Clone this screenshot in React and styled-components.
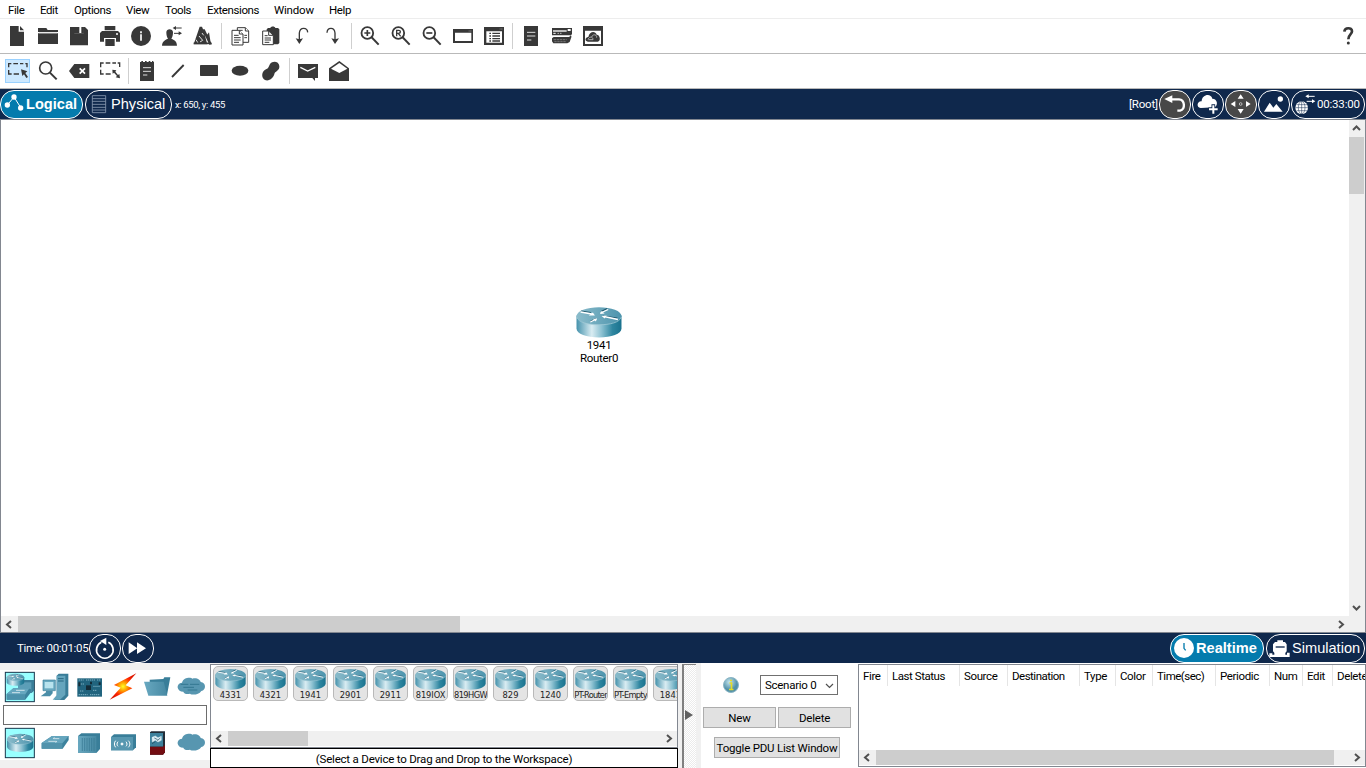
import React from "react";
import styled, { createGlobalStyle, css } from "styled-components";

const INK = "#383838";
const NAVY = "#0f284c";
const TEAL = "#5796b0";

const GlobalStyle = createGlobalStyle`
  html, body { margin: 0; padding: 0; overflow: hidden; }
  *, *::before, *::after { box-sizing: border-box; }
  body { background: #f0f0f0; }
`;

const Window = styled.div`
  width: 1366px;
  height: 768px;
  display: flex;
  flex-direction: column;
  overflow: hidden;
  font-family: Roboto, "Liberation Sans", Arial, sans-serif;
  font-size: 11.5px;
  letter-spacing: -0.28px;
  line-height: 13px;
  color: #000;
  white-space: nowrap;
`;

const MenuBar = styled.nav`
  height: 19px;
  flex: none;
  display: flex;
  padding: 4px 0 0 8px;
  background: #fff;
  border-bottom: 1px solid #ededed;
`;
const MenuItem = styled.span`
  width: ${(p) => p.$w}px;
  letter-spacing: ${(p) => p.$ls ?? -0.4}px;
`;

const ToolBar = styled.div`
  height: 35px;
  flex: none;
  display: flex;
  padding-left: 2px;
  background: #fff;
  border-bottom: 1px solid #b9b9b9;
`;
const ToolButton = styled.div`
  width: 31px;
  height: 34px;
  display: flex;
  color: ${INK};
  ${(p) =>
    p.$active &&
    css`
      background: linear-gradient(#cce8ff, #cce8ff) 4px 6px / 23px 22px no-repeat,
        linear-gradient(#99d1ff, #99d1ff) 3px 5px / 25px 24px no-repeat;
    `}
  ${(p) => p.$end && "margin-left: auto;"}
`;
const Separator = styled.div`
  width: 6px;
  height: 26px;
  margin-top: 4px;
  flex: none;
  &::before {
    content: "";
    display: block;
    width: 1px;
    height: 26px;
    margin-left: 2px;
    background: #cfcfcf;
  }
`;
const Glyph = styled.svg`
  display: block;
  flex: none;
  overflow: visible;
`;

const NavyBar = styled.div`
  height: ${(p) => p.$h}px;
  flex: none;
  display: flex;
  align-items: center;
  background: ${NAVY};
  color: #fff;
  padding: ${(p) => p.$pad};
`;
const PillGroup = styled.div`
  display: flex;
  gap: ${(p) => p.$gap}px;
`;
const Pill = styled.div`
  height: 29px;
  width: ${(p) => p.$w}px;
  flex: none;
  display: flex;
  align-items: center;
  border: 1px solid #fff;
  border-radius: ${(p) => p.$r ?? 14}px;
  background: ${(p) => p.$bg ?? "transparent"};
  font-family: ${(p) => (p.$small ? "inherit" : '"Liberation Sans", Arial, sans-serif')};
  font-size: ${(p) => (p.$small ? "11.5px" : "14.6px")};
  font-weight: ${(p) => (p.$bold ? 700 : 400)};
  letter-spacing: ${(p) => (p.$small ? "-0.2px" : "0")};
  line-height: 20px;
  color: #fff;
`;
const BarText = styled.span`
  margin-left: ${(p) => p.$ml ?? 0}px;
  font-size: ${(p) => p.$size ?? 11.5}px;
  letter-spacing: ${(p) => p.$ls ?? -0.2}px;
  width: ${(p) => (p.$w ? p.$w + "px" : "auto")};
`;
const Spacer = styled.div`
  flex: 1;
`;

const Workspace = styled.main`
  height: 514px;
  flex: none;
  display: grid;
  grid-template-columns: 1fr 16px;
  grid-template-rows: 1fr 16px;
  border: 1px solid #828790;
  background: #fff;
`;
const Canvas = styled.div`
  position: relative;
`;
const DeviceNode = styled.div`
  position: absolute;
  left: ${(p) => p.$x}px;
  top: ${(p) => p.$y}px;
  width: 60px;
  display: flex;
  flex-direction: column;
  align-items: center;
`;
const Scroll = styled.div`
  display: flex;
  flex-direction: ${(p) => (p.$vertical ? "column" : "row")};
  align-items: stretch;
  background: #f0f0f0;
  height: ${(p) => (p.$h ? p.$h + "px" : "auto")};
  flex: none;
`;
const ArrowBox = styled.div`
  width: ${(p) => (p.$tall ? 15 : 17)}px;
  min-height: ${(p) => (p.$tall ? 17 : 15)}px;
  flex: none;
  display: flex;
  align-items: center;
  justify-content: center;
`;
const Thumb = styled.div`
  background: #cdcdcd;
  width: ${(p) => (p.$w ? p.$w + "px" : "auto")};
  height: ${(p) => (p.$h ? p.$h + "px" : "auto")};
  margin-right: ${(p) => (p.$h ? 1 : 0)}px;
`;
const Corner = styled.div`
  background: #f0f0f0;
`;

const Dock = styled.div`
  height: 105px;
  flex: none;
  display: flex;
  background: #f0f0f0;
`;
const Palette = styled.div`
  width: 210px;
  height: 90px;
  margin-top: 7px;
  background: #fff;
  display: flex;
  flex-direction: column;
  flex: none;
`;
const PaletteRow = styled.div`
  display: flex;
  height: 35px;
  padding-left: 3px;
`;
const SearchBox = styled.div`
  height: 20px;
  margin: 0 3px;
  border: 1px solid #6d6d6d;
  background: #fff;
`;
const Models = styled.div`
  width: 468px;
  flex: none;
  display: flex;
  flex-direction: column;
  padding-top: 1px;
`;
const ModelList = styled.div`
  height: 84px;
  border: 1px solid #828790;
  background: #fff;
  display: flex;
  flex-direction: column;
  justify-content: space-between;
  padding-bottom: 1px;
`;
const ModelRow = styled.div`
  display: flex;
  gap: 5px;
  padding: 1px 0 0 2px;
  overflow: hidden;
`;
const Tile = styled.div`
  width: 35px;
  height: 35px;
  flex: none;
  border: 1px solid #b9b9b9;
  border-radius: 5px;
  background: #e4e4e4;
  display: flex;
  flex-direction: column;
  align-items: center;
  overflow: hidden;
`;
const TileLabel = styled.span`
  font-family: "DejaVu Sans", sans-serif;
  font-size: 8.3px;
  line-height: 9px;
  letter-spacing: ${(p) => p.$ls}px;
  color: #222;
`;
const Hint = styled.div`
  height: 20px;
  border: 1px solid #000;
  background: #fff;
  text-align: center;
  line-height: 20px;
  letter-spacing: -0.2px;
`;
const Splitter = styled.div`
  width: 14px;
  margin: 1px 5px 0 4px;
  padding-bottom: 4px;
  flex: none;
  display: flex;
  align-items: center;
  border-left: 2px solid #808080;
  border-top: 1px solid #808080;
  background: repeating-conic-gradient(#fff 0 25%, #ebebeb 0 50%) 0 0 / 2px 2px;
`;
const Scenario = styled.section`
  width: 157px;
  flex: none;
  background: #fff;
  padding: 12px 7px 0 2px;
`;
const ScenarioRow = styled.div`
  display: flex;
  justify-content: ${(p) => p.$justify ?? "flex-start"};
  height: ${(p) => p.$h}px;
  gap: 2px;
`;
const Select = styled.div`
  width: 78px;
  height: 20px;
  flex: none;
  margin-left: auto;
  margin-right: 13px;
  border: 1px solid #707070;
  padding: 0 3px 0 4px;
  display: flex;
  align-items: center;
  justify-content: space-between;
`;
const Button = styled.div`
  width: ${(p) => p.$w}px;
  height: 21px;
  border: 1px solid #adadad;
  background: #e1e1e1;
  text-align: center;
  line-height: 20px;
  letter-spacing: ${(p) => p.$ls ?? -0.2}px;
`;
const PduArea = styled.section`
  flex: 1;
  min-width: 0;
  background: #fff;
  padding-top: 1px;
`;
const PduTable = styled.div`
  height: 103px;
  border: 1px solid #828790;
  display: flex;
  flex-direction: column;
  justify-content: space-between;
  overflow: hidden;
  padding-bottom: 1px;
`;
const HeaderRow = styled.div`
  display: flex;
  overflow: hidden;
`;
const HeaderCell = styled.span`
  width: ${(p) => p.$w}px;
  height: 21px;
  flex: none;
  padding-left: 4px;
  line-height: 23px;
  border-right: 1px solid #e5e5e5;
  letter-spacing: ${(p) => p.$ls ?? -0.38}px;
`;

const Defs = styled.svg`
  position: absolute;
  width: 0;
  height: 0;
`;

const arrowPaths = {
  left: "M6 1 L2 4.5 L6 8",
  right: "M3 1 L7 4.5 L3 8",
  up: "M1 6 L4.5 2.5 L8 6",
  down: "M1 3 L4.5 6.5 L8 3",
};
const Arrow = ({ dir, width = 2 }) => (
  <Glyph width="9" height="9" viewBox="0 0 9 9">
    <path d={arrowPaths[dir]} fill="none" stroke="#505050" strokeWidth={width} />
  </Glyph>
);

const Tool = ({ x, y = 57, active, end, children }) => (
  <ToolButton $active={active} $end={end}>
    <Glyph width="31" height="34" viewBox={`${x} ${y} 93 102`} fill="currentColor">
      {children}
    </Glyph>
  </ToolButton>
);

const line = { fill: "none", stroke: INK };
const white = { fill: "none", stroke: "#fff" };

const Lens = ({ cx, children }) => (
  <>
    <circle cx={cx} cy="99" r="17.5" {...line} strokeWidth="5.5" />
    <path d={`M${cx + 12} 111 L${cx + 34} 134`} {...line} strokeWidth="6" />
    {children}
  </>
);

/* Disc-shaped router with four arrows on its lid, 90 x 62 units */
const RouterArt = ({ shade = "url(#router)" }) => (
  <>
    <path d="M0 17 V43 C0 54 20 61 44 61 S88 54 88 43 V17 Z" fill={shade} />
    <ellipse cx="44" cy="18" rx="44" ry="17.5" fill="url(#lid)" />
    <path d="M0 20 C4 31 22 35.500 44 35.500 S84 31 88 20" fill="none" stroke="#a3cad6" strokeWidth="1.500" />
    <path d="M9 8 L28 11 M48 9 L60 3 M52 18 L80 22 M27 29 L38 23" fill="none" stroke="#22586d" strokeWidth="2" />
    <g fill="none" stroke="#fff" strokeWidth="2.600">
      <path d="M8 10 L30 14 M47 12 L62 5 M54 19 L81 25 M27 30 L39 24" />
    </g>
    <g fill="#fff">
      <path d="M36 17 L24 17 L32 11 Z M46 14 L49 8 L55 13 Z M49 18 L59 17 L55 23 Z M40 23 L38 29 L32 24 Z" />
    </g>
  </>
);

const menus = [
  ["File", 32], ["Edit", 34], ["Options", 52], ["View", 39], ["Tools", 42],
  ["Extensions", 67], ["Window", 55, -0.2], ["Help", 30],
];
const models = [
  ["4331", 0.1], ["4321", 0.1], ["1941", 0.1], ["2901", 0.1], ["2911", 0.1], ["819IOX", -0.05],
  ["819HGW", -0.6], ["829", 0], ["1240", 0], ["PT-Router", -0.8], ["PT-Empty", -0.75], ["1841", 0.1],
];
const columns = [
  ["Fire", 29], ["Last Status", 72, -0.45], ["Source", 48], ["Destination", 72, -0.5], ["Type", 36], ["Color", 37],
  ["Time(sec)", 63, -0.5], ["Periodic", 54], ["Num", 33], ["Edit", 30], ["Delete", 50],
];

const MainTools = () => (
  <ToolBar>
    <Tool x={6}>
      <path d="M30 78 H56 V95 H72 V138 H30 Z M60 78 L72 91 H60 Z" />
    </Tool>
    <Tool x={99}>
      <path d="M114 84 H139 L143 90 H174 V96 H114 Z M114 100 H174 V132 H114 Z" />
      <path d="M117 99 H171" stroke="#bbb" strokeWidth="2" />
    </Tool>
    <Tool x={192}>
      <path d="M210 81 H255 L264 90 V136 H210 Z" />
      <path d="M222 80 H250 V102 H222 Z" fill="#fff" />
      <path d="M222 81 H238 V99 H222 Z M244 81 H250 V99 H244 Z" />
      <path d="M222 81 V101 H250 V81" {...line} strokeWidth="3" />
    </Tool>
    <Tool x={285}>
      <path d="M314 78 H346 V91 H314 Z M306 93 H354 L360 99 V125 H348 V114 H312 V125 H300 V99 Z M316 117 H344 V138 H316 Z" />
      <circle cx="351" cy="102" r="3" fill="#fff" />
    </Tool>
    <Tool x={378}>
      <circle cx="423" cy="108" r="30" />
      <path d="M420 94 H426 V100 H420 Z M420 103 H426 V122 H420 Z" fill="#ddd" />
    </Tool>
    <Tool x={471}>
      <path d="M499 97 C499 85 519 85 519 97 C519 105 517 112 514 116 C525 121 530 124 531 137 H486 C487 125 492 121 504 116 C501 112 499 105 499 97 Z" />
      <path d="M524 84 H545 M522 100 H542" {...line} strokeWidth="3" />
      <path d="M518 84 L528 78 V90 Z M546 100 L536 94 V106 Z" />
    </Tool>
    <Tool x={564}>
      <path d="M599 80 L606 80 L610 90 L622 133 H581 Z M606 88 L614 88 L636 133 L628 134 Z M621 105 L627 97 L633 134 Z" />
      <path d="M597 108 L608 121 M608 121 L600 126 M606 99 L611 106 M588 119 L594 129" stroke="#fff" strokeWidth="2.5" fill="none" />
      <path d="M581 130 H634" stroke={INK} strokeWidth="5" />
    </Tool>
    <Separator />
    <Tool x={675}>
      <g fill="#fff" stroke={INK} strokeWidth="3">
        <path d="M712 83 H736 L746 93 V127 H712 Z" />
        <path d="M696 91 H718 L729 102 V135 H696 Z" />
        <path d="M736 83 V93 H746 M718 91 V102 H729" />
      </g>
      <path d="M702 106 H716 M702 113 H722 M702 120 H722 M702 127 H717 M733 106 H741 M733 113 H741 M718 91 H728" {...line} strokeWidth="3" />
    </Tool>
    <Tool x={768}>
      <path d="M800 88 L804 84 H811 C812 78 825 78 826 84 H834 L838 88 V129 L834 133 H800 Z" />
      <path d="M788 93 H806 L820 106 V134 H788 Z" fill="#fff" stroke={INK} strokeWidth="3" />
      <path d="M806 93 V106 H820 M794 107 H803 M794 114 H813 M794 120 H813 M794 127 H808" {...line} strokeWidth="3" />
    </Tool>
    <Tool x={861}>
      <path d="M923 97 C922 82 900 80 898 99 V120" {...line} strokeWidth="4" />
      <path d="M887 115 L898 118 L909 115 L898 132 Z" />
    </Tool>
    <Tool x={954}>
      <path d="M981 98 C982 82 1003 80 1005 99 V120" {...line} strokeWidth="4" />
      <path d="M994 115 L1005 118 L1017 115 L1005 132 Z" />
    </Tool>
    <Separator />
    <Tool x={45}>
      <Lens cx={82}>
        <path d="M73 99 H91 M82 90 V108" {...line} strokeWidth="5" />
      </Lens>
    </Tool>
    <Tool x={138}>
      <Lens cx={175}>
        <path d="M170 109 V91 H176 C183 91 183 100 176 100 H170 M175 100 L182 109" {...line} strokeWidth="4" />
      </Lens>
    </Tool>
    <Tool x={231}>
      <Lens cx={268}>
        <path d="M259 99 H277" {...line} strokeWidth="5" />
      </Lens>
    </Tool>
    <Tool x={324}>
      <path d="M339 87 H399 V129 H339 Z M345 98 V123 H394 V98 Z" fillRule="evenodd" />
      <path d="M386 93 H396" stroke="#aaa" strokeWidth="2" strokeDasharray="3 1.5" />
    </Tool>
    <Tool x={417}>
      <path d="M432 81 H492 V135 H432 Z M439 94 V128 H486 V94 Z" fillRule="evenodd" />
      <path d="M448 100 H453 M457 100 H480 M448 108 H453 M457 108 H480 M448 116 H453 M457 116 H480 M448 123 H453 M457 123 H480" {...line} strokeWidth="4" />
      <path d="M479 87 H489" stroke="#aaa" strokeWidth="2" strokeDasharray="3 1.5" />
    </Tool>
    <Separator />
    <Tool x={528}>
      <path d="M552 78 H594 V138 H552 Z" />
      <path d="M561 97 H586 M561 108 H586 M561 120 H574" stroke="#ddd" strokeWidth="3" />
    </Tool>
    <Tool x={621}>
      <path d="M636 84 H696 V103 L690 107 H694 V112 L689 126 L682 130 H640 L636 124 V115 L641 111 H688 L691 106 H636 Z" />
      <path d="M639 93 H680" stroke="#fff" strokeWidth="4" />
      <path d="M640 100 H647 M653 100 H656 M661 100 H664" stroke="#fff" strokeWidth="3" />
      <path d="M641 119 H680 M643 125 H678" stroke="#999" strokeWidth="2" strokeDasharray="7 2" />
      <path d="M683 87 H692 V93 H683 Z" fill="#fff" />
    </Tool>
    <Tool x={714}>
      <path d="M729 78 H789 V138 H729 Z M735 92 V132 H783 V92 Z" fillRule="evenodd" />
      <path d="M744 125 C733 124 735 111 745 111 C748 94 766 92 770 104 C781 104 783 124 773 125 Z" />
      <path d="M744 118 C748 109 759 109 759 119 H745 M755 111 C758 101 772 103 770 113" fill="none" stroke="#aaa" strokeWidth="3" />
    </Tool>
    <Tool x={675} y={-3} end>
      <path d="M703 35 C704 22 726 21 726 34 C726 44 715 43 715 58" {...line} strokeWidth="8" />
      <circle cx="715" cy="69" r="4.5" />
    </Tool>
  </ToolBar>
);

const DrawTools = () => (
  <ToolBar>
    <Tool x={6} y={162} active>
      <path d="M26 202 V191 H34 M40 191 H54 M60 191 H70 M76 191 H81 V202 M26 210 V222 H35 M41 222 H57" {...line} strokeWidth="4" />
      <path d="M63 208 L82 214 L76 219 L84 231 L79 234 L72 223 L67 228 Z" />
    </Tool>
    <Tool x={99} y={162}>
      <circle cx="137" cy="204" r="18" {...line} strokeWidth="5" />
      <path d="M149 217 L170 238" {...line} strokeWidth="6" />
    </Tool>
    <Tool x={192} y={162}>
      <path d="M207 213 L223 192 H268 V234 H223 Z" />
      <path d="M239 205 L255 221 M255 205 L239 221" stroke="#fff" strokeWidth="5" />
    </Tool>
    <Tool x={285} y={162}>
      <path d="M302 202 V189 H311 M317 189 H331 M337 189 H348 M353 189 H359 V201 M302 209 V222 H311 M317 222 H332" {...line} strokeWidth="4" />
      <path d="M337 209 L349 211 L346 215 L354 225 L358 222 L360 235 L347 232 L351 228 L342 218 L338 221 Z" />
    </Tool>
    <Separator />
    <Tool x={396} y={162}>
      <path d="M420 186 H424 V183 H429 V186 H435 V183 H440 V186 H446 V183 H451 V186 H456 V183 H460 V186 H462 V243 H420 Z" />
      <path d="M429 203 H453 M429 214 H453 M429 225 H442" stroke="#ddd" strokeWidth="3" />
    </Tool>
    <Tool x={489} y={162}>
      <path d="M516 231 L551 195" {...line} strokeWidth="5.5" />
    </Tool>
    <Tool x={582} y={162}>
      <rect x="600" y="195" width="54" height="33" rx="2" />
    </Tool>
    <Tool x={675} y={162}>
      <ellipse cx="720" cy="212.500" rx="25" ry="15" />
    </Tool>
    <Tool x={768} y={162}>
      <path d="M810 192 C818 181 837 184 838 198 C839 211 829 213 824 219 C821 234 807 245 795 240 C783 235 784 214 798 208 C806 205 806 199 810 192 Z" />
    </Tool>
    <Separator />
    <Tool x={879} y={162}>
      <path d="M894 192 H954 V234 H945 V243 L937 234 H894 Z" />
      <path d="M901 202 L923 213 L946 202" stroke="#fff" strokeWidth="4" fill="none" />
    </Tool>
    <Tool x={972} y={162}>
      <path d="M987 205 L1018 183 L1047 205 V243 H987 Z" />
      <path d="M993 206 L1018 189 L1042 206 L1018 219 Z" fill="#fff" />
    </Tool>
  </ToolBar>
);

const LocationBar = () => (
  <NavyBar $h={30} $pad="0 1px 0 0">
    <PillGroup $gap={2}>
      <Pill $w={83} $bg="#047bad" $bold>
        <Glyph width="25" height="27" viewBox="3 273 75 81" fill="#fff">
          <path d="M22 315 L42 291 L63 324" {...white} strokeWidth="3" />
          <circle cx="22" cy="315" r="8" /><circle cx="42" cy="291" r="8" /><circle cx="62" cy="324" r="8" />
        </Glyph>
        Logical
      </Pill>
      <Pill $w={87}>
        <Glyph width="25" height="27" viewBox="258 273 75 81">
          <path d="M277 287 H317 V338 H277 Z M277 296 H317 M277 304 H317 M277 313 H317 M277 322 H317 M277 330 H317" fill="none" stroke="#8c9bb2" strokeWidth="2.500" />
        </Glyph>
        Physical
      </Pill>
    </PillGroup>
    <BarText $ml={3} $size={9.5} $ls={-0.35}>x: 650, y: 455</BarText>
    <Spacer />
    <BarText $w={30}>[Root]</BarText>
    <PillGroup $gap={1}>
      <Pill $w={32} $bg="#484848">
        <Glyph width="30" height="27" viewBox="151 213 90 81">
          <path d="M180 238 H208 C226 239 228 268 211 272 H203" {...white} strokeWidth="7" />
          <path d="M164 237 L188 226 V249 Z" fill="#fff" />
        </Glyph>
      </Pill>
      <Pill $w={32}>
        <Glyph width="30" height="27" viewBox="250 213 90 81" fill="#fff">
          <path d="M273 264 C258 262 263 242 276 244 C276 223 304 218 308 236 C323 236 327 256 314 262 Z" />
          <path d="M311 253 V283 M296 268 H326" stroke={NAVY} strokeWidth="11" />
          <path d="M311 256 V281 M298 268 H324" stroke="#fff" strokeWidth="6" />
        </Glyph>
      </Pill>
      <Pill $w={32} $bg="#484848">
        <Glyph width="30" height="27" viewBox="349 213 90 81" fill="#fff">
          <path d="M393 223 L402 236 H384 Z M393 281 L402 267 H384 Z M363 252 L377 243 V261 Z M423 252 L409 243 V261 Z" />
          <circle cx="393" cy="252" r="4" fill="none" stroke="#bbb" strokeWidth="3" />
        </Glyph>
      </Pill>
      <Pill $w={32}>
        <Glyph width="30" height="27" viewBox="448 213 90 81" fill="#fff">
          <path d="M463 275 L480 248 L491 263 L500 252 L519 275 Z" />
          <circle cx="512" cy="237" r="8" />
        </Glyph>
      </Pill>
      <Pill $w={74} $small>
        <Glyph width="25" height="27" viewBox="546 213 75 81" fill="#fff">
          <circle cx="575" cy="263" r="19" />
          <path d="M556 263 H594 M575 244 V282 M560 254 H591 M560 272 H591" stroke={NAVY} strokeWidth="1.500" />
          <ellipse cx="575" cy="263" rx="10" ry="19" fill="none" stroke={NAVY} strokeWidth="1.500" />
          <path d="M592 229 H614 M590 244 H609" stroke="#fff" strokeWidth="3" />
          <path d="M586 229 L596 223 V235 Z M616 244 L606 238 V250 Z" />
        </Glyph>
        00:33:00
      </Pill>
    </PillGroup>
  </NavyBar>
);

const TimeBar = () => (
  <NavyBar $h={30} $pad="0 1px 0 17px">
    <BarText $w={72} $ls={-0.32}>Time: 00:01:05</BarText>
    <PillGroup $gap={1}>
      <Pill $w={32}>
        <Glyph width="30" height="27" viewBox="271 105 90 81" fill="#fff">
          <path d="M305 127 A25 25 0 1 0 326 127" {...white} strokeWidth="5" />
          <path d="M301 123 L320 113 V135 Z" /><circle cx="315" cy="148" r="4.500" />
        </Glyph>
      </Pill>
      <Pill $w={32}>
        <Glyph width="30" height="27" viewBox="370 105 90 81" fill="#fff">
          <path d="M387 127 L413 145 L387 162 Z M412 127 L439 145 L412 162 Z" />
        </Glyph>
      </Pill>
    </PillGroup>
    <Spacer />
    <PillGroup $gap={2}>
      <Pill $w={94} $bg="#047bad" $bold>
        <Glyph width="25" height="27" viewBox="135 135 75 81">
          <circle cx="174" cy="174" r="30" fill="#fff" />
          <path d="M174 159 V175 L179 181" fill="none" stroke="#047bad" strokeWidth="4" />
        </Glyph>
        Realtime
      </Pill>
      <Pill $w={99}>
        <Glyph width="25" height="27" viewBox="424 135 75 81" fill="#fff">
          <path d="M455 151 H472 V156 H478 L483 163 V184 L479 188 H446 L442 184 V163 L448 156 H455 Z" />
          <path d="M431 190 H440 V194 H484 V188 H492 V201 H431 Z M446 186 H479 V196 H446 Z" />
          <path d="M450 171 H477" stroke={NAVY} strokeWidth="4" />
        </Glyph>
        Simulation
      </Pill>
    </PillGroup>
  </NavyBar>
);

const Cell = ({ i, y, children }) => (
  <Glyph width="34" height="35" viewBox={`${9 + 102 * i} ${y} 102 105`}>
    {children}
  </Glyph>
);

const DevicePalette = () => (
  <Palette>
    <PaletteRow>
      <Cell i={0} y={210}>
        <rect x="16" y="217" width="87" height="88" fill="#99ffff" stroke="#17384d" strokeWidth="3" />
        <path d="M54 247 L61 240 H102 V272 L95 279 H54 Z" fill="#397d98" />
        <path d="M54 247 H94 V278 H54 Z" fill="#5c9eb7" />
        <g transform="translate(20 221) scale(.6)"><RouterArt /></g>
        <path d="M20 282 L40 265 H84 L93 268 V277 L76 299 H20 Z" fill="#3c829d" />
        <path d="M20 282 L40 265 H88 L75 284 H20 Z" fill="#66a7bf" />
        <path d="M20 283 H75 V299 H20 Z" fill="#4c91ab" />
        <path d="M36 278 H60 M48 271 H74" stroke="#fff" strokeWidth="2" />
      </Cell>
      <Cell i={1} y={210}>
        <path d="M170 227 L176 221 H205 V287 L193 300 H163 L170 291 Z" fill="#397d98" />
        <path d="M170 227 H196 V284 L180 299 H158 L170 286 Z" fill="#65a5bd" />
        <path d="M174 236 H191 M174 243 H191" stroke="#286780" strokeWidth="3" />
        <path d="M129 240 H166 V272 H129 Z" fill="#68a9c0" stroke="#3b819b" strokeWidth="2" />
        <path d="M134 246 H160 V265 H134 Z" fill="#b8e3ee" />
        <path d="M138 273 H158 V280 L150 289 H122 L138 277 Z" fill="#4b8ea8" />
      </Cell>
      <Cell i={2} y={210}>
        <rect x="232" y="235" width="74" height="55" fill="#21647e" />
        <path d="M258 256 H273 V270 H258 Z" fill="#142c38" />
        <path d="M236 240 H251 M258 240 H285 M291 240 H302 M236 284 H263 M270 284 H300 M242 252 H253 M280 259 H300 M240 273 H251 M279 271 H289" stroke="#7db0c3" strokeWidth="3" strokeDasharray="4 2" />
        <path d="M238 247 V259 M299 247 V255 M273 245 V253" stroke="#142c38" strokeWidth="6" />
      </Cell>
      <Cell i={3} y={210}>
        <path d="M409 220 L342 255 L362 263 L329 299 L397 265 L377 256 Z" fill="url(#bolt)" />
      </Cell>
      <Cell i={4} y={210}>
        <path d="M449 239 L490 237 L493 232 H511 L501 285 L450 279 Z" fill="#397e99" />
        <path d="M432 245 H491 L502 287 H445 Z" fill="url(#device)" />
      </Cell>
      <Cell i={5} y={210}>
        <path d="M550 275 C530 275 526 250 546 248 C550 233 571 231 577 236 C589 231 602 240 602 246 C619 247 619 271 604 273 C596 285 577 286 570 281 C560 284 552 281 550 275 Z" fill={TEAL} />
        <path d="M542 253 H565 M570 253 H598 M550 262 H582 M563 270 H592" stroke="#347891" strokeWidth="3" />
      </Cell>
    </PaletteRow>
    <SearchBox />
    <PaletteRow>
      <Cell i={0} y={375}>
        <rect x="16" y="385" width="87" height="88" fill="#99ffff" stroke="#17384d" strokeWidth="3" />
        <g transform="translate(21 401) scale(.9)"><RouterArt /></g>
      </Cell>
      <Cell i={1} y={375}>
        <path d="M125 429 L156 408 H206 V420 L188 446 H125 Z" fill="#3c829d" />
        <path d="M125 429 L156 408 H206 L187 430 Z" fill="#65a5bd" />
        <path d="M125 429 H187 V446 H125 Z" fill="#5193ac" />
        <path d="M145 424 H170 L167 428 M178 416 H160 L163 412" stroke="#fff" strokeWidth="2" fill="none" />
      </Cell>
      <Cell i={2} y={375}>
        <path d="M234 408 L244 400 H300 V447 L290 458 H234 Z" fill="#397e99" />
        <path d="M234 408 H289 V458 H234 Z" fill="url(#device)" />
        <path d="M247 414 V453 M254 414 V453 M261 414 V453 M268 414 V453 M275 414 V453 M282 414 V453" stroke="#34768f" strokeWidth="2" />
      </Cell>
      <Cell i={3} y={375}>
        <path d="M333 411 L342 403 H408 V442 L399 451 H333 Z" fill="#397e99" />
        <path d="M333 411 H399 V451 H333 Z" fill="#5797b0" />
        <g fill="none" stroke="#fff" strokeWidth="3">
          <path d="M347 422 C342 427 342 437 347 442 M354 425 C350 430 350 435 354 439 M378 425 C382 430 382 435 378 439 M385 422 C391 428 391 436 385 442" />
          <circle cx="366" cy="432" r="3" fill="#fff" />
        </g>
      </Cell>
      <Cell i={4} y={375}>
        <path d="M450 397 L454 394 H495 V457 L489 464 H450 Z" fill="#222d38" />
        <path d="M450 399 H489 V440 H450 Z" fill="#3d819c" />
        <path d="M450 440 H489 L495 435 V457 L489 464 H450 Z" fill="#730d12" />
        <path d="M456 412 L466 408 L474 413 L484 409 V421 L474 426 L466 421 L457 426 Z" fill="#d9edf5" stroke="#fff" />
        <path d="M463 414 L473 419 M481 414 L472 422 M466 425 L456 431" stroke="#1b4355" strokeWidth="2" />
      </Cell>
      <Cell i={5} y={375}>
        <path d="M550 443 C530 443 526 418 546 416 C550 401 571 399 577 404 C589 399 602 408 602 414 C619 415 619 439 604 441 C596 453 577 454 570 449 C560 452 552 449 550 443 Z" fill={TEAL} />
      </Cell>
    </PaletteRow>
  </Palette>
);

export default function App() {
  return (
    <Window>
      <GlobalStyle />
      <Defs>
        <defs>
          <linearGradient id="router">
            <stop offset="0" stopColor="#4592ac" />
            <stop offset=".34" stopColor="#d9ecf2" />
            <stop offset=".55" stopColor="#8fc3d3" />
            <stop offset=".8" stopColor="#2f86a0" />
            <stop offset="1" stopColor="#1a728e" />
          </linearGradient>
          <linearGradient id="lid">
            <stop offset="0" stopColor="#8bbccb" />
            <stop offset="1" stopColor="#4d94ad" />
          </linearGradient>
          <linearGradient id="device">
            <stop offset="0" stopColor="#68a8c0" />
            <stop offset="1" stopColor="#4789a3" />
          </linearGradient>
          <radialGradient id="bolt">
            <stop offset="0" stopColor="#ffff25" />
            <stop offset=".35" stopColor="#ff9800" />
            <stop offset=".7" stopColor="#ff2500" />
            <stop offset="1" stopColor="#dd1700" />
          </radialGradient>
          <radialGradient id="info" cx=".4" cy=".3">
            <stop offset="0" stopColor="#c4e4ed" />
            <stop offset="1" stopColor="#5291a9" />
          </radialGradient>
        </defs>
      </Defs>
      <MenuBar>
        {menus.map(([name, w, ls]) => (
          <MenuItem key={name} $w={w} $ls={ls}>{name}</MenuItem>
        ))}
      </MenuBar>
      <MainTools />
      <DrawTools />
      <LocationBar />
      <Workspace>
        <Canvas>
          <DeviceNode $x={568} $y={187}>
            <Glyph width="46" height="32" viewBox="-1 0 90 64" preserveAspectRatio="none"><RouterArt /></Glyph>
            <span>1941</span>
            <span>Router0</span>
          </DeviceNode>
        </Canvas>
        <Scroll $vertical>
          <ArrowBox $tall><Arrow dir="up" /></ArrowBox>
          <Thumb $h={57} />
          <Spacer />
          <ArrowBox $tall><Arrow dir="down" /></ArrowBox>
        </Scroll>
        <Scroll>
          <ArrowBox><Arrow dir="left" /></ArrowBox>
          <Thumb $w={442} />
          <Spacer />
          <ArrowBox><Arrow dir="right" /></ArrowBox>
        </Scroll>
        <Corner />
      </Workspace>
      <TimeBar />
      <Dock>
        <DevicePalette />
        <Models>
          <ModelList>
            <ModelRow>
              {models.map(([name, ls]) => (
                <Tile key={name}>
                  <Glyph width="31" height="24" viewBox="-1 -5 90 70" preserveAspectRatio="none"><RouterArt /></Glyph>
                  <TileLabel $ls={ls}>{name}</TileLabel>
                </Tile>
              ))}
            </ModelRow>
            <Scroll $h={15}>
              <ArrowBox><Arrow dir="left" /></ArrowBox>
              <Thumb $w={80} />
              <Spacer />
              <ArrowBox><Arrow dir="right" /></ArrowBox>
            </Scroll>
          </ModelList>
          <Hint>(Select a Device to Drag and Drop to the Workspace)</Hint>
        </Models>
        <Splitter>
          <Glyph width="9" height="10" viewBox="0 0 9 10"><path d="M1 0 L9 5 L1 10 Z" fill="#606060" /></Glyph>
        </Splitter>
        <Scenario>
          <ScenarioRow $h={32}>
            <Glyph width="54" height="20" viewBox="0 0 54 20">
              <circle cx="28" cy="10" r="7.500" fill="url(#info)" stroke="#8ab5c4" />
              <path d="M27 5.500 H29 M26.500 8 H28.500 V14 M26 14.500 H30.500" fill="none" stroke="#e5dc25" strokeWidth="1.600" />
            </Glyph>
            <Select>Scenario 0<Arrow dir="down" width={1.2} /></Select>
          </ScenarioRow>
          <ScenarioRow $h={30}>
            <Button $w={73}>New</Button>
            <Button $w={73}>Delete</Button>
          </ScenarioRow>
          <ScenarioRow $h={21} $justify="center">
            <Button $w={126}>Toggle PDU List Window</Button>
          </ScenarioRow>
        </Scenario>
        <PduArea>
          <PduTable>
            <HeaderRow>
              {columns.map(([name, w, ls]) => (
                <HeaderCell key={name} $w={w} $ls={ls}>{name}</HeaderCell>
              ))}
            </HeaderRow>
            <Scroll $h={15}>
              <ArrowBox><Arrow dir="left" /></ArrowBox>
              <Thumb $w={458} />
              <Spacer />
              <ArrowBox><Arrow dir="right" /></ArrowBox>
            </Scroll>
          </PduTable>
        </PduArea>
      </Dock>
    </Window>
  );
}
